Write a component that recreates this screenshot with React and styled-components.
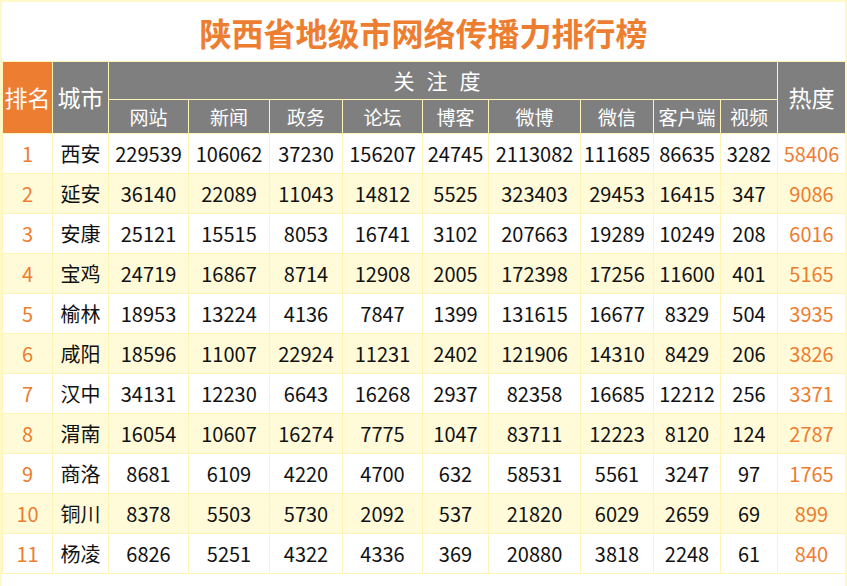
import React from "react";
import styled, { createGlobalStyle } from "styled-components";

const G = createGlobalStyle`
  html,body{margin:0;padding:0;background:#fff;}
  body{font-family:"Noto Sans CJK SC","Noto Sans",sans-serif;}
`;
const Wrap = styled.div`
  width:847px;height:586px;overflow:hidden;box-sizing:border-box;
  border:2px solid #fff8c8;border-bottom:none;background:#fff;
`;
const Title = styled.div`
  height:59px;display:flex;align-items:center;justify-content:center;
  font-size:32px;font-weight:700;color:#ed7d31;letter-spacing:0px;
`;
const Table = styled.table`
  border-collapse:collapse;table-layout:fixed;width:843px;
  td,th{border:1px solid #fff4b8;padding:0;text-align:center;white-space:nowrap;overflow:hidden;line-height:1;}
`;
const H = styled.th`
  background:${p=>p.$o?"#ed7d31":"#7f7f7f"};color:#fff;font-weight:400;
  font-size:${p=>p.$s||19}px;height:${p=>p.$h||33}px;letter-spacing:${p=>p.$ls||0}px;
`;
const Row = styled.tr`background:${p=>p.$alt?"#fffbd9":"#fff"};height:40px;`;
const Cell = styled.td`
  font-size:20px;color:${p=>p.$o?"#ed7d31":"#111"};
`;
const widths=[50,56,80,81,73,80,66,92,73,67,57,68];
const cols=["网站","新闻","政务","论坛","博客","微博","微信","客户端","视频"];
const data=[
["西安",229539,106062,37230,156207,24745,2113082,111685,86635,3282,58406],
["延安",36140,22089,11043,14812,5525,323403,29453,16415,347,9086],
["安康",25121,15515,8053,16741,3102,207663,19289,10249,208,6016],
["宝鸡",24719,16867,8714,12908,2005,172398,17256,11600,401,5165],
["榆林",18953,13224,4136,7847,1399,131615,16677,8329,504,3935],
["咸阳",18596,11007,22924,11231,2402,121906,14310,8429,206,3826],
["汉中",34131,12230,6643,16268,2937,82358,16685,12212,256,3371],
["渭南",16054,10607,16274,7775,1047,83711,12223,8120,124,2787],
["商洛",8681,6109,4220,4700,632,58531,5561,3247,97,1765],
["铜川",8378,5503,5730,2092,537,21820,6029,2659,69,899],
["杨凌",6826,5251,4322,4336,369,20880,3818,2248,61,840],
];
export default function App(){
  return <><G/><Wrap>
    <Title>陕西省地级市网络传播力排行榜</Title>
    <Table>
      <colgroup>{widths.map((w,i)=><col key={i} style={{width:w}}/>)}</colgroup>
      <thead>
        <tr>
          <H $o rowSpan={2} $s={23} $h={37}>排名</H>
          <H rowSpan={2} $s={23}>城市</H>
          <H colSpan={9} $s={21} $h={37} $ls={12}>关注度</H>
          <H rowSpan={2} $s={23}>热度</H>
        </tr>
        <tr>{cols.map(c=><H key={c}>{c}</H>)}</tr>
      </thead>
      <tbody>
        {data.map((r,i)=><Row key={i} $alt={i%2===1}>
          <Cell $o>{i+1}</Cell>
          {r.slice(0,10).map((v,j)=><Cell key={j}>{v}</Cell>)}
          <Cell $o>{r[10]}</Cell>
        </Row>)}
      </tbody>
    </Table>
  </Wrap></>;
}
